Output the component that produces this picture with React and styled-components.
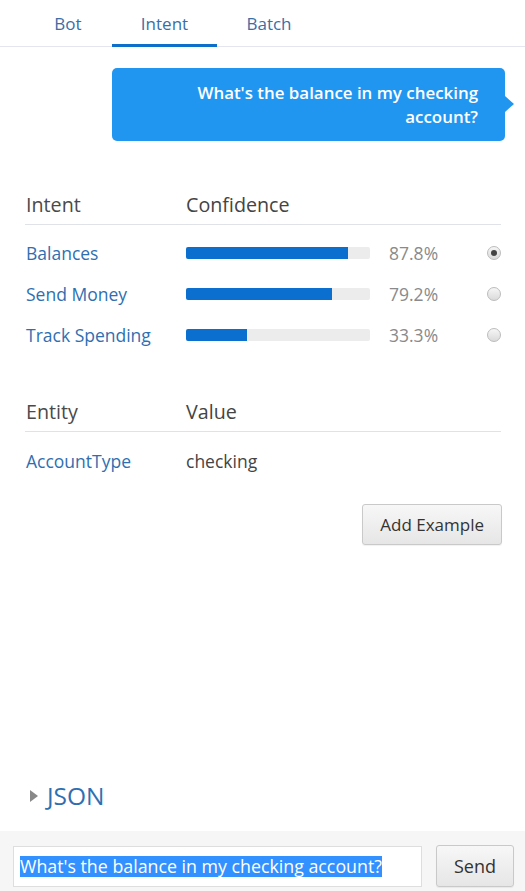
import React from "react";
import styled, { createGlobalStyle } from "styled-components";

const Global = createGlobalStyle`
  html, body { margin: 0; padding: 0; background: #fff; }
  body { font-family: "Open Sans", "Noto Sans", sans-serif; color: #333; }
`;

const Page = styled.div`
  width: 525px;
  min-height: 891px;
  display: flex;
  flex-direction: column;
`;

const Tabs = styled.nav`
  display: flex;
  height: 46px;
  border-bottom: 1px solid #e3e6ee;
  padding-left: 24px;
`;

const Tab = styled.div`
  width: ${(p) => p.w}px;
  display: flex;
  align-items: center;
  justify-content: center;
  font-size: 17px;
  color: #3b6ea5;
  box-sizing: border-box;
  margin-bottom: -1px;
  border-bottom: 3px solid ${(p) => (p.active ? "#0d6fc9" : "transparent")};
  padding-top: 2px;
`;

const BubbleRow = styled.div`
  display: flex;
  justify-content: flex-end;
  padding: 21px 20px 0 0;
`;

const Bubble = styled.div`
  position: relative;
  width: 393px;
  box-sizing: border-box;
  background: #2196f0;
  color: #fff;
  border-radius: 5px;
  padding: 13px 27px 12px 60px;
  text-align: right;
  font-size: 16.9px;
  font-weight: 600;
  line-height: 24px;
  &::after {
    content: "";
    position: absolute;
    right: -9px;
    top: 28px;
    border-left: 9px solid #2196f0;
    border-top: 8px solid transparent;
    border-bottom: 8px solid transparent;
  }
`;

const Table = styled.section`
  margin: ${(p) => p.top}px 24px 0 25px;
`;

const HeadRow = styled.div`
  display: flex;
  align-items: center;
  height: 40px;
  border-bottom: 1px solid #dfe2e8;
  font-size: 19.7px;
  color: #4a4a4a;
`;

const Row = styled.div`
  display: flex;
  align-items: center;
  height: 41px;
  margin-top: ${(p) => p.first || 0}px;
  font-size: 17.5px;
`;

const Name = styled.div`
  width: 160px;
  padding-left: 1px;
  color: ${(p) => (p.head ? "#4a4a4a" : "#2f6fb1")};
`;

const Value = styled.div`
  color: #444;
`;

const BarTrack = styled.div`
  width: 184px;
  height: 12px;
  background: #ececec;
  border-radius: 2px;
  overflow: hidden;
`;

const BarFill = styled.div`
  height: 100%;
  background: #0a6fcf;
`;

const Pct = styled.div`
  margin-left: 19px;
  width: 81px;
  color: #8a8a8a;
`;

const Radio = styled.span`
  margin-left: 17px;
  width: 14px;
  height: 14px;
  border-radius: 50%;
  box-sizing: border-box;
  border: 1px solid #bcbcbc;
  background: linear-gradient(#f6f6f6, #dadada);
  display: flex;
  align-items: center;
  justify-content: center;
  &::after {
    content: "";
    display: ${(p) => (p.checked ? "block" : "none")};
    width: 6px;
    height: 6px;
    border-radius: 50%;
    background: #444;
  }
`;

const Actions = styled.div`
  display: flex;
  justify-content: flex-end;
  padding: 23px 23px 0 0;
`;

const Button = styled.button`
  font-family: inherit;
  font-size: ${(p) => p.fs || 17}px;
  color: #333;
  height: ${(p) => p.h || 41}px;
  padding: 0 ${(p) => p.px || 16}px;
  border: 1px solid #c9c9c9;
  border-radius: 3px;
  background: linear-gradient(#f7f7f7, #e6e6e6);
  box-shadow: 0 1px 1px rgba(0, 0, 0, 0.06);
`;

const Json = styled.div`
  margin-top: auto;
  padding: 0 0 19px 30px;
  display: flex;
  align-items: center;
  gap: 9px;
  font-size: 24.5px;
  color: #2f6fb1;
`;

const Arrow = styled.span`
  width: 0;
  height: 0;
  border-left: 8px solid #888;
  border-top: 6px solid transparent;
  border-bottom: 6px solid transparent;
`;

const Composer = styled.footer`
  background: #f6f6f7;
  height: 60px;
  display: flex;
  align-items: flex-end;
  padding: 0 11px 4px 13px;
  box-sizing: border-box;
  gap: 14px;
`;

const Field = styled.div`
  flex: 1;
  height: 41px;
  box-sizing: border-box;
  background: #fff;
  border: 1px solid #dedede;
  display: flex;
  align-items: center;
  padding-left: 6px;
  font-size: 17.8px;
`;

const Selected = styled.span`
  background: #3390ff;
  color: #fff;
  line-height: 21px;
`;

const intents = [
  { name: "Balances", pct: 87.8, checked: true },
  { name: "Send Money", pct: 79.2 },
  { name: "Track Spending", pct: 33.3 },
];

export default function App() {
  return (
    <Page>
      <Global />
      <Tabs>
        <Tab w={88}>Bot</Tab>
        <Tab w={105} active>Intent</Tab>
        <Tab w={104}>Batch</Tab>
      </Tabs>
      <BubbleRow>
        <Bubble>What's the balance in my checking account?</Bubble>
      </BubbleRow>
      <Table top={43}>
        <HeadRow>
          <Name head>Intent</Name>
          <Value>Confidence</Value>
        </HeadRow>
        {intents.map((it, i) => (
          <Row key={it.name} first={i === 0 ? 7 : 0}>
            <Name>{it.name}</Name>
            <BarTrack>
              <BarFill style={{ width: `${it.pct}%` }} />
            </BarTrack>
            <Pct>{it.pct}%</Pct>
            <Radio checked={it.checked} />
          </Row>
        ))}
      </Table>
      <Table top={36}>
        <HeadRow>
          <Name head>Entity</Name>
          <Value>Value</Value>
        </HeadRow>
        <Row first={8}>
          <Name>AccountType</Name>
          <Value>checking</Value>
        </Row>
      </Table>
      <Actions>
        <Button px={17}>Add Example</Button>
      </Actions>
      <Json>
        <Arrow />
        JSON
      </Json>
      <Composer>
        <Field>
          <Selected>What's the balance in my checking account?</Selected>
        </Field>
        <Button h={42} px={17} fs={18}>Send</Button>
      </Composer>
    </Page>
  );
}
